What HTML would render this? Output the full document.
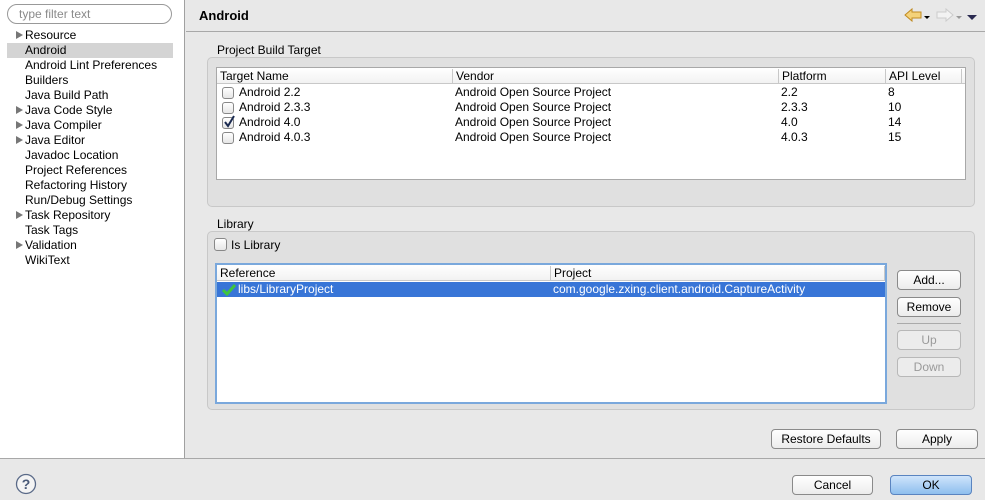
<!DOCTYPE html>
<html><head><style>
*{box-sizing:border-box;margin:0;padding:0}
body{width:985px;height:500px;background:#e8e8e8;font:12px "Liberation Sans",sans-serif;color:#000;position:relative;overflow:hidden}
.a{position:absolute}
.btn{position:absolute;height:20px;border:1px solid #8a8a8a;border-radius:4px;background:linear-gradient(#fff,#ececec);text-align:center;line-height:18px;font-size:12px}
.dis{color:#9a9a9a;border-color:#b8b8b8;background:#ececec}
.grp{position:absolute;border:1px solid #c8c8c8;border-radius:5px;background:#e0e0e0}
.tbl{position:absolute;background:#fff;border:1px solid #a8a8a8}
.hd{position:absolute;height:16px;border-bottom:1px solid #c8c8c8;background:linear-gradient(#fff,#f2f2f2);width:100%;top:0;left:0}
.hd span{position:absolute;top:1px;border-left:1px solid #c8c8c8;padding-left:3px;height:14px;line-height:14px}
.row{position:absolute;left:0;width:100%;height:15px;line-height:15px}
.row span{position:absolute}
.cb{position:absolute;width:12px;height:12px;border:1px solid #888;border-radius:3px;background:linear-gradient(#fff,#e6e6e6)}
.tree div{height:15px;line-height:15px;padding-left:25px;position:relative}
.tri{position:absolute;left:16px;top:3px;width:0;height:0;border-left:7px solid #777;border-top:4.5px solid transparent;border-bottom:4.5px solid transparent}
</style></head><body>
<div class="a" style="left:0;top:0;width:185px;height:458px;background:#fff;border-right:1px solid #a0a0a0"></div>
<div class="a" style="left:7px;top:4px;width:165px;height:20px;border:1px solid #999;border-radius:10px;background:#fff;color:#8a8a8a;padding-left:11px;line-height:18px">type filter text</div>
<div class="a tree" style="left:0;top:28px;width:185px">
<div><i class="tri"></i>Resource</div>
<div style="background:#d4d4d4;margin-left:7px;width:166px;padding-left:18px">Android</div>
<div>Android Lint Preferences</div>
<div>Builders</div>
<div>Java Build Path</div>
<div><i class="tri"></i>Java Code Style</div>
<div><i class="tri"></i>Java Compiler</div>
<div><i class="tri"></i>Java Editor</div>
<div>Javadoc Location</div>
<div>Project References</div>
<div>Refactoring History</div>
<div>Run/Debug Settings</div>
<div><i class="tri"></i>Task Repository</div>
<div>Task Tags</div>
<div><i class="tri"></i>Validation</div>
<div>WikiText</div>
</div>
<div class="a" style="left:199px;top:8px;font-weight:bold;font-size:13px">Android</div>
<div class="a" style="left:186px;top:31px;width:799px;height:1px;background:#a8a8a8"></div>
<svg class="a" style="left:903px;top:7px" width="80" height="18">
<path d="M2 8 L9 2 L9 5 L18 5 L18 11 L9 11 L9 14 Z" fill="#f4d27a" stroke="#c08a20"/>
<path d="M21 9 L27 9 L24 12Z" fill="#000"/>
<path d="M50 8 L43 2 L43 5 L34 5 L34 11 L43 11 L43 14 Z" fill="#f2f2f2" stroke="#ccc"/>
<path d="M53 9 L59 9 L56 12Z" fill="#999"/>
<path d="M64 8 L74 8 L69 13Z" fill="#2a2a50"/>
</svg>
<div class="a" style="left:217px;top:43px">Project Build Target</div>
<div class="grp" style="left:207px;top:57px;width:768px;height:150px"></div>
<div class="tbl" style="left:216px;top:67px;width:750px;height:113px">
<div class="hd"><span style="left:0;border:0">Target Name</span><span style="left:235px">Vendor</span><span style="left:561px">Platform</span><span style="left:668px">API Level</span><span style="left:744px"></span></div>
<div class="row" style="top:17px"><i class="cb" style="left:5px;top:2px"></i><span style="left:22px">Android 2.2</span><span style="left:238px">Android Open Source Project</span><span style="left:564px">2.2</span><span style="left:671px">8</span></div>
<div class="row" style="top:32px"><i class="cb" style="left:5px;top:2px"></i><span style="left:22px">Android 2.3.3</span><span style="left:238px">Android Open Source Project</span><span style="left:564px">2.3.3</span><span style="left:671px">10</span></div>
<div class="row" style="top:47px"><i class="cb" style="left:5px;top:2px"></i><svg class="a" style="left:5px;top:0" width="14" height="14"><path d="M3 7 L6 11 L12 1" stroke="#1a2a50" stroke-width="2" fill="none"/></svg><span style="left:22px">Android 4.0</span><span style="left:238px">Android Open Source Project</span><span style="left:564px">4.0</span><span style="left:671px">14</span></div>
<div class="row" style="top:62px"><i class="cb" style="left:5px;top:2px"></i><span style="left:22px">Android 4.0.3</span><span style="left:238px">Android Open Source Project</span><span style="left:564px">4.0.3</span><span style="left:671px">15</span></div>
</div>
<div class="a" style="left:217px;top:217px">Library</div>
<div class="grp" style="left:207px;top:231px;width:768px;height:179px"></div>
<i class="cb" style="left:214px;top:238px;width:13px;height:13px"></i>
<div class="a" style="left:231px;top:238px">Is Library</div>
<div class="tbl" style="left:215px;top:263px;width:672px;height:141px;border:2px solid #7aa8dc">
<div class="hd"><span style="left:0;border:0">Reference</span><span style="left:333px">Project</span><span style="left:667px"></span></div>
<div class="row" style="top:17px;background:#3875d7;color:#fff"><svg class="a" style="left:5px;top:1px" width="14" height="14"><path d="M1 7 L5 11 L13 2" stroke="#3ec43e" stroke-width="3" fill="none"/></svg><span style="left:21px">libs/LibraryProject</span><span style="left:336px">com.google.zxing.client.android.CaptureActivity</span></div>
</div>
<div class="btn" style="left:897px;top:270px;width:64px">Add...</div>
<div class="btn" style="left:897px;top:297px;width:64px">Remove</div>
<div class="a" style="left:897px;top:323px;width:64px;height:1px;background:#aaa"></div>
<div class="btn dis" style="left:897px;top:330px;width:64px">Up</div>
<div class="btn dis" style="left:897px;top:357px;width:64px">Down</div>
<div class="btn" style="left:771px;top:429px;width:110px">Restore Defaults</div>
<div class="btn" style="left:896px;top:429px;width:82px">Apply</div>
<div class="a" style="left:0;top:458px;width:985px;height:1px;background:#a8a8a8"></div>
<svg class="a" style="left:15px;top:473px" width="22" height="22"><circle cx="11" cy="11" r="9.5" fill="#f4f4f4" stroke="#5a6a88" stroke-width="1.3"/><text x="11" y="16" text-anchor="middle" font-family="Liberation Sans" font-weight="bold" font-size="14" fill="#4a5a78">?</text></svg>
<div class="btn" style="left:792px;top:475px;width:81px">Cancel</div>
<div class="btn" style="left:890px;top:475px;width:82px;border-color:#5a84c0;background:linear-gradient(#cfe4fb,#8ebfee)">OK</div>
</body></html>
